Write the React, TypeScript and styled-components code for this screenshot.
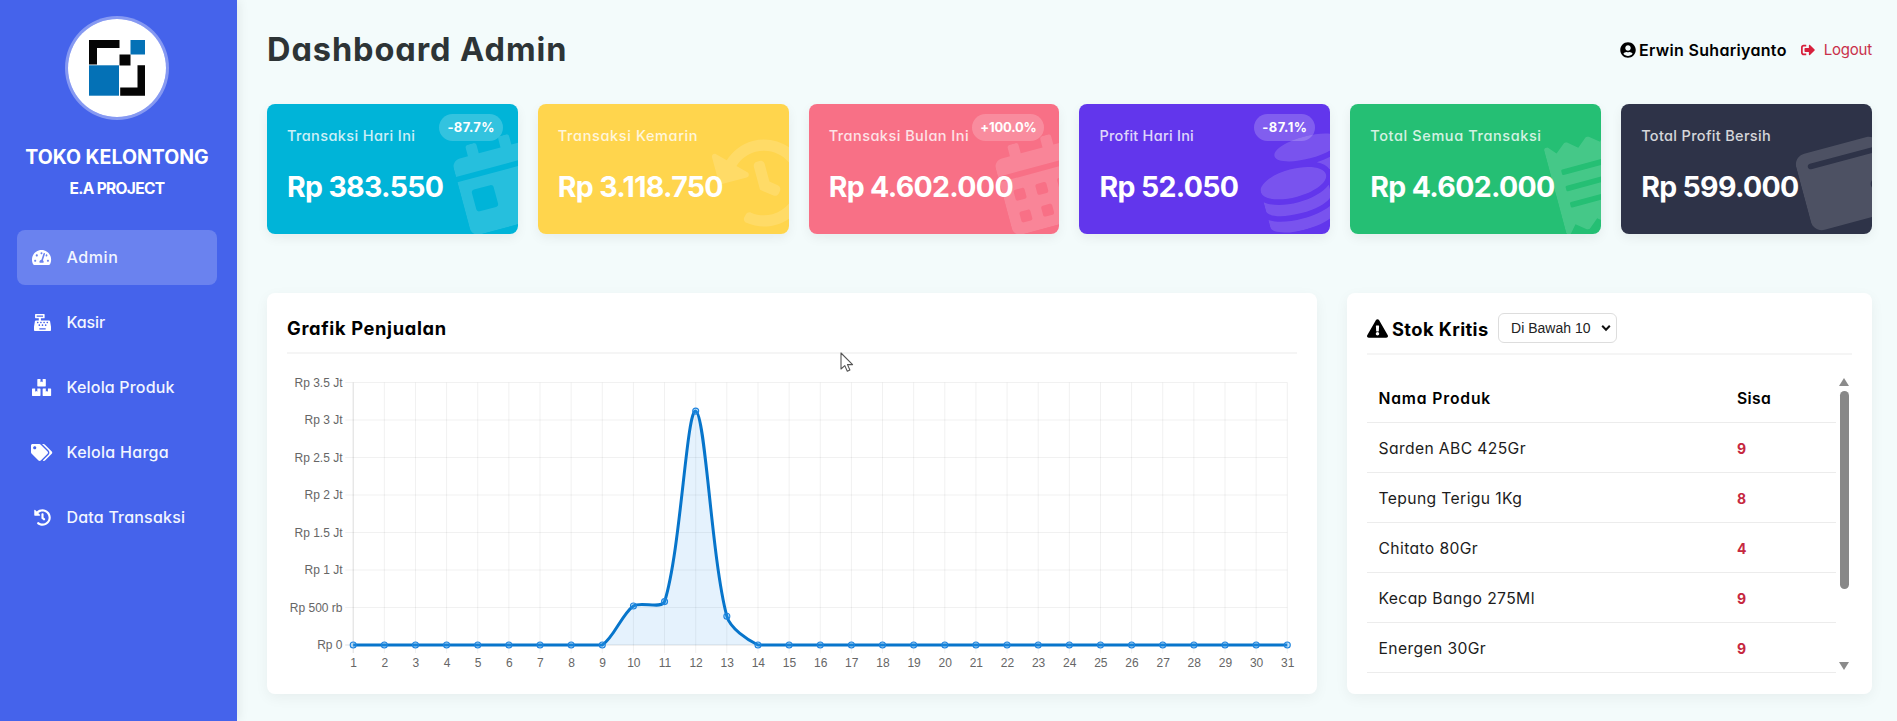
import React from "react";
import styled, { createGlobalStyle } from "styled-components";
import type { IconType } from "react-icons";
import {
  FaBoxes,
  FaCalendarAlt,
  FaCalendarDay,
  FaCashRegister,
  FaCoins,
  FaExclamationTriangle,
  FaHistory,
  FaReceipt,
  FaSignOutAlt,
  FaTachometerAlt,
  FaTags,
  FaUserCircle,
  FaWallet,
} from "react-icons/fa";

const GlobalStyle = createGlobalStyle`
  *, *::before, *::after { box-sizing: border-box; }
  body {
    margin: 0;
    background: #f3fbfb;
    color: #000;
    font-family: Inter, "Open Sans", sans-serif;
    font-feature-settings: "cv11" 1;
    overflow: hidden;
  }
`;

/* ---------- Layout ---------- */

const Layout = styled.div`
  display: flex;
  width: 100%;
  height: 721px;
`;

const Sidebar = styled.aside`
  display: flex;
  flex-direction: column;
  flex: 0 0 237px;
  padding: 15.5px 20px 0 17px;
  background: #4563eb;
  color: #fff;
  box-shadow: 2px 0 10px rgba(0, 0, 0, 0.08);
`;

const Main = styled.main`
  flex: 1;
  min-width: 0;
  padding: 19px 25px 27px 30px;
  display: flex;
  flex-direction: column;
`;

/* ---------- Sidebar ---------- */

const LogoCircle = styled.div`
  display: flex;
  align-items: center;
  justify-content: center;
  align-self: center;
  width: 104px;
  height: 104px;
  border-radius: 50%;
  border: 3px solid rgba(255, 255, 255, 0.35);
  background: #fff;
  background-clip: padding-box;
`;

const StoreName = styled.div`
  margin-top: 22px;
  text-align: center;
  font-size: 19.5px;
  line-height: 30px;
  font-weight: 700;
  white-space: nowrap;
`;

const StoreOwner = styled.div`
  margin-top: 5px;
  text-align: center;
  font-size: 15.5px;
  line-height: 24px;
  font-weight: 700;
  letter-spacing: -0.65px;
`;

const Nav = styled.nav`
  display: flex;
  flex-direction: column;
  gap: 10px;
  margin-top: 29px;
`;

const NavItem = styled.a<{ $active?: boolean; $track: number }>`
  display: flex;
  align-items: center;
  height: 55px;
  padding-left: 14px;
  border-radius: 8px;
  background: ${(p) => (p.$active ? "rgba(255, 255, 255, 0.2)" : "transparent")};
  color: #f2f6ff;
  font-size: 16px;
  font-weight: 500;
  letter-spacing: ${(p) => p.$track}px;
`;

const NavIcon = styled.span<{ $ratio: number }>`
  display: flex;
  justify-content: center;
  width: 22px;
  margin-right: 13.5px;
  font-size: 17px;
  color: #fff;

  && svg {
    flex: none;
    width: ${(p) => p.$ratio}em;
    height: 1em;
  }
`;

/* ---------- Header ---------- */

const Header = styled.header`
  display: flex;
  align-items: center;
  justify-content: space-between;
  height: 61px;
`;

const PageTitle = styled.h1`
  margin: 0;
  color: #2d3436;
  font-size: 32.5px;
  font-weight: 700;
  letter-spacing: 0.92px;
`;

const UserArea = styled.div`
  display: flex;
  align-items: center;
`;

const UserName = styled.span`
  display: flex;
  align-items: center;
  gap: 3px;
  font-size: 16px;
  font-weight: 600;
  letter-spacing: 0.32px;
`;

const Logout = styled.a`
  display: flex;
  align-items: center;
  gap: 9px;
  margin-left: 14px;
  color: #c9304a;
  font-size: 15px;
  letter-spacing: -0.2px;

  svg {
    color: #d7203c;
    font-size: 14px;
  }
`;

/* ---------- Stat cards ---------- */

const Cards = styled.section`
  display: grid;
  grid-template-columns: repeat(6, 1fr);
  gap: 20px;
  margin-top: 23.5px;
`;

const Card = styled.article<{ $color: string }>`
  position: relative;
  overflow: hidden;
  height: 130px;
  padding: 20px;
  border-radius: 8px;
  background: ${(p) => p.$color};
  color: #fff;
`;

const CardShell = styled.div`
  border-radius: 8px;
  box-shadow: 0 4px 12px rgba(0, 0, 0, 0.06);
`;

const CardLabel = styled.div<{ $track: number }>`
  line-height: 24px;
  font-size: 14.5px;
  font-weight: 500;
  letter-spacing: ${(p) => p.$track}px;
  white-space: nowrap;
  opacity: 0.8;
`;

const CardValue = styled.div`
  position: relative;
  margin-top: 18px;
  font-size: 28.5px;
  line-height: 42px;
  font-weight: 700;
  letter-spacing: -0.68px;
  white-space: nowrap;
`;

const CardBadge = styled.span<{ $track: number }>`
  position: absolute;
  top: 10px;
  right: 15px;
  padding: 0 8px;
  border-radius: 14px;
  background: rgba(255, 255, 255, 0.2);
  font-size: 13px;
  line-height: 27px;
  font-weight: 700;
  letter-spacing: ${(p) => p.$track}px;
`;

const CardIcon = styled.span<{ $ratio: number }>`
  position: absolute;
  right: -20px;
  bottom: 6px;
  width: ${(p) => p.$ratio}em;
  height: 1em;
  font-size: 90px;
  line-height: 0;
  color: rgba(255, 255, 255, 0.15);
  transform: rotate(-15deg);

  && svg {
    display: block;
    width: 100%;
    height: 100%;
  }
`;

/* ---------- Panels ---------- */

const Panels = styled.section`
  display: grid;
  grid-template-columns: 2fr 1fr;
  gap: 30px;
  height: 401.5px;
  margin-top: 59px;
`;

const Panel = styled.section`
  display: flex;
  flex-direction: column;
  min-width: 0;
  padding: 20px;
  border-radius: 8px;
  background: #fff;
  box-shadow: 0 4px 14px rgba(0, 0, 0, 0.05);
`;

const PanelHeader = styled.div<{ $height: number }>`
  display: flex;
  align-items: center;
  flex: none;
  height: ${(p) => p.$height}px;
  padding-bottom: 9px;
  border-bottom: 2px solid #f5f5f5;
`;

const PanelTitle = styled.h3<{ $track: number }>`
  display: flex;
  align-items: center;
  gap: 4px;
  margin: 0;
  padding-top: 1px;
  font-size: 18.3px;
  font-weight: 700;
  letter-spacing: ${(p) => p.$track}px;
  white-space: nowrap;

  svg {
    font-size: 21px;
  }
`;

const ThresholdSelect = styled.button`
  display: flex;
  align-items: center;
  justify-content: space-between;
  width: 118.5px;
  height: 30.5px;
  margin-left: 9.5px;
  padding: 0 4.5px 0 12px;
  border: 1px solid #ddd;
  border-radius: 6px;
  background: #fff;
  color: #222;
  font-family: "Liberation Sans", Arial, sans-serif;
  font-size: 14px;
`;

const ChartSvg = styled.svg`
  display: block;
  width: 1010px;
  height: 310px;
  margin-top: 10px;
  font-family: "Liberation Sans", Arial, sans-serif;
  font-size: 12px;
`;

/* ---------- Stock table ---------- */

const ScrollArea = styled.div`
  display: flex;
  flex: none;
  height: 300px;
  margin-top: 19px;
  overflow: hidden;
`;

const Table = styled.div`
  flex: 1;
`;

const Row = styled.div<{ $head?: boolean }>`
  display: grid;
  grid-template-columns: 358.5px 1fr;
  align-items: center;
  height: ${(p) => (p.$head ? 49.5 : 50.1)}px;
  padding: 1.5px 0 0 11.5px;
  border-bottom: 1px solid #ececec;
  font-size: 15.7px;
  font-weight: ${(p) => (p.$head ? 600 : 400)};
  letter-spacing: ${(p) => (p.$head ? 0.83 : 0.37)}px;
  color: ${(p) => (p.$head ? "#000" : "#1c1c1c")};
`;

const SisaHead = styled.span`
  letter-spacing: 0.35px;
`;

const Amount = styled.span`
  color: #c62840;
  font-size: 14px;
  font-weight: 700;
`;

const Scrollbar = styled.div`
  display: flex;
  flex-direction: column;
  align-items: center;
  width: 16px;
  padding: 4px 0 4px;
`;

const Arrow = styled.span<{ $down?: boolean }>`
  width: 0;
  height: 0;
  border-left: 5px solid transparent;
  border-right: 5px solid transparent;
  border-${(p) => (p.$down ? "top" : "bottom")}: 8px solid #8b8b8b;
  margin-top: ${(p) => (p.$down ? "auto" : "0")};
`;

const Thumb = styled.span`
  width: 9px;
  height: 198px;
  margin-top: 5.5px;
  border-radius: 5px;
  background: #888;
`;

const Pointer = styled.svg`
  position: absolute;
  left: 840px;
  top: 352px;
`;

/* ---------- Data ---------- */

/* `ratio` is the width of each glyph relative to its height. */

const navItems: { label: string; icon: IconType; ratio: number; track: number; active?: boolean }[] = [
  { label: "Admin", icon: FaTachometerAlt, ratio: 1.125, track: 0.6, active: true },
  { label: "Kasir", icon: FaCashRegister, ratio: 1, track: -0.1 },
  { label: "Kelola Produk", icon: FaBoxes, ratio: 1.125, track: 0.17 },
  { label: "Kelola Harga", icon: FaTags, ratio: 1.25, track: 0.27 },
  { label: "Data Transaksi", icon: FaHistory, ratio: 1, track: 0.2 },
];

const cards: {
  label: string;
  value: string;
  color: string;
  icon: IconType;
  ratio: number;
  track: number;
  badge?: string;
  badgeTrack?: number;
}[] = [
  { label: "Transaksi Hari Ini", value: "Rp 383.550", color: "#00b4d8", icon: FaCalendarDay, ratio: 0.875, track: 0.39, badge: "-87.7%", badgeTrack: 0.36 },
  { label: "Transaksi Kemarin", value: "Rp 3.118.750", color: "#ffd54d", icon: FaHistory, ratio: 1, track: 0.62 },
  { label: "Transaksi Bulan Ini", value: "Rp 4.602.000", color: "#f87086", icon: FaCalendarAlt, ratio: 0.875, track: 0.46, badge: "+100.0%", badgeTrack: -0.2 },
  { label: "Profit Hari Ini", value: "Rp 52.050", color: "#6236ec", icon: FaCoins, ratio: 1, track: 0.25, badge: "-87.1%", badgeTrack: 0.42 },
  { label: "Total Semua Transaksi", value: "Rp 4.602.000", color: "#25bf74", icon: FaReceipt, ratio: 0.75, track: 0.6 },
  { label: "Total Profit Bersih", value: "Rp 599.000", color: "#2e3348", icon: FaWallet, ratio: 1, track: 0.33 },
];

const stock: [string, number][] = [
  ["Sarden ABC 425Gr", 9],
  ["Tepung Terigu 1Kg", 8],
  ["Chitato 80Gr", 4],
  ["Kecap Bango 275Ml", 9],
  ["Energen 30Gr", 9],
];

const sales = Array.from({ length: 31 }, (_, i) => {
  const byDay: Record<number, number> = { 10: 520700, 11: 579000, 12: 3118750, 13: 383550 };
  return byDay[i + 1] ?? 0;
});

const yLabels = ["Rp 0", "Rp 500 rb", "Rp 1 Jt", "Rp 1.5 Jt", "Rp 2 Jt", "Rp 2.5 Jt", "Rp 3 Jt", "Rp 3.5 Jt"];

/* ---------- Chart ---------- */

const plot = { left: 66.2, right: 1000.3, top: 18.5, bottom: 281 };
const TENSION = 0.3;

type Point = { x: number; y: number };

const points: Point[] = sales.map((v, i) => ({
  x: plot.left + (i * (plot.right - plot.left)) / 30,
  y: plot.bottom - (v / 3500000) * (plot.bottom - plot.top),
}));

const clampY = (y: number) => Math.min(plot.bottom, Math.max(plot.top, y));

function controls(prev: Point, cur: Point, next: Point) {
  const d01 = Math.hypot(cur.x - prev.x, cur.y - prev.y);
  const d12 = Math.hypot(next.x - cur.x, next.y - cur.y);
  const fa = (TENSION * d01) / (d01 + d12 || 1);
  const fb = (TENSION * d12) / (d01 + d12 || 1);
  return {
    before: { x: cur.x - fa * (next.x - prev.x), y: clampY(cur.y - fa * (next.y - prev.y)) },
    after: { x: cur.x + fb * (next.x - prev.x), y: clampY(cur.y + fb * (next.y - prev.y)) },
  };
}

const handles = points.map((p, i) => controls(points[i - 1] ?? p, p, points[i + 1] ?? p));

const linePath = points.reduce((d, p, i) => {
  if (i === 0) return `M${p.x} ${p.y}`;
  const a = handles[i - 1].after;
  const b = handles[i].before;
  return `${d}C${a.x} ${a.y} ${b.x} ${b.y} ${p.x} ${p.y}`;
}, "");

const areaPath = `${linePath}L${plot.right} ${plot.bottom}L${plot.left} ${plot.bottom}Z`;

function SalesChart() {
  return (
    <ChartSvg viewBox="0 0 1010 310">
      {yLabels.map((label, i) => {
        const y = plot.bottom - (i * (plot.bottom - plot.top)) / 7;
        return (
          <g key={label}>
            <line x1={plot.left - 8} x2={plot.right} y1={y} y2={y} stroke="#000" strokeOpacity={i === 0 ? 0.12 : 0.055} />
            <text x={55.5} y={y + 4} textAnchor="end" fill="#666">
              {label}
            </text>
          </g>
        );
      })}
      {points.map((p, i) => (
        <g key={i}>
          <line x1={p.x} x2={p.x} y1={plot.top} y2={plot.bottom + 8} stroke="#000" strokeOpacity={i === 0 ? 0.14 : 0.06} />
          <text x={p.x + 0.4} y={302.8} textAnchor="middle" fill="#666">
            {i + 1}
          </text>
        </g>
      ))}
      <path d={areaPath} fill="rgba(0, 132, 240, 0.1)" />
      <path d={linePath} fill="none" stroke="#0775cb" strokeWidth={3} strokeLinejoin="round" />
      {points.map((p, i) => (
        <circle key={i} cx={p.x} cy={p.y} r={3} fill="rgba(54, 162, 245, 0.3)" stroke="#1f83dd" strokeWidth={1.1} />
      ))}
    </ChartSvg>
  );
}

function Logo() {
  return (
    <svg width="56" height="56" viewBox="0 0 56 56">
      <path d="M0 0H30.5V8H8V24.5H0Z" fill="#050505" />
      <rect x="41.5" y="0" width="14.5" height="14.5" fill="#0471b6" />
      <rect x="30.5" y="14.5" width="11" height="11" fill="#050505" />
      <rect x="0" y="25.3" width="30" height="30.4" fill="#0471b6" />
      <path d="M48.5 25.3H56V55.8H31.2V47.6H48.5Z" fill="#050505" />
    </svg>
  );
}

export default function App() {
  return (
    <Layout>
      <GlobalStyle />
      <Sidebar>
        <LogoCircle>
          <Logo />
        </LogoCircle>
        <StoreName>TOKO KELONTONG</StoreName>
        <StoreOwner>E.A PROJECT</StoreOwner>
        <Nav>
          {navItems.map(({ label, icon: Icon, ratio, track, active }) => (
            <NavItem key={label} $active={active} $track={track}>
              <NavIcon $ratio={ratio}>
                <Icon />
              </NavIcon>
              {label}
            </NavItem>
          ))}
        </Nav>
      </Sidebar>

      <Main>
        <Header>
          <PageTitle>Dashboard Admin</PageTitle>
          <UserArea>
            <UserName>
              <FaUserCircle />
              Erwin Suhariyanto
            </UserName>
            <Logout>
              <FaSignOutAlt />
              Logout
            </Logout>
          </UserArea>
        </Header>

        <Cards>
          {cards.map(({ label, value, color, icon: Icon, ratio, track, badge, badgeTrack }) => (
            <CardShell key={label}>
              <Card $color={color}>
                <CardIcon $ratio={ratio}>
                  <Icon />
                </CardIcon>
                <CardLabel $track={track}>{label}</CardLabel>
                <CardValue>{value}</CardValue>
                {badge && <CardBadge $track={badgeTrack ?? 0}>{badge}</CardBadge>}
              </Card>
            </CardShell>
          ))}
        </Cards>

        <Panels>
          <Panel>
            <PanelHeader $height={41}>
              <PanelTitle $track={0.66}>Grafik Penjualan</PanelTitle>
            </PanelHeader>
            <SalesChart />
          </Panel>

          <Panel>
            <PanelHeader $height={42}>
              <PanelTitle $track={0.4}>
                <FaExclamationTriangle />
                Stok Kritis
              </PanelTitle>
              <ThresholdSelect>
                Di Bawah 10
                <svg width="10" height="8" viewBox="0 0 10 8">
                  <path d="M1.2 1.8L5 5.8L8.8 1.8" fill="none" stroke="#111" strokeWidth="2" />
                </svg>
              </ThresholdSelect>
            </PanelHeader>
            <ScrollArea>
              <Table>
                <Row $head>
                  <span>Nama Produk</span>
                  <SisaHead>Sisa</SisaHead>
                </Row>
                {stock.map(([name, amount]) => (
                  <Row key={name}>
                    <span>{name}</span>
                    <Amount>{amount}</Amount>
                  </Row>
                ))}
              </Table>
              <Scrollbar>
                <Arrow />
                <Thumb />
                <Arrow $down />
              </Scrollbar>
            </ScrollArea>
          </Panel>
        </Panels>
      </Main>

      <Pointer width="14" height="21" viewBox="0 0 14 21">
        <path
          d="M1 1V17L4.8 13.6L7.3 19.2L9.9 18L7.5 12.6H12.6Z"
          fill="#fff"
          stroke="#555"
          strokeWidth="1.1"
          strokeLinejoin="round"
        />
      </Pointer>
    </Layout>
  );
}
